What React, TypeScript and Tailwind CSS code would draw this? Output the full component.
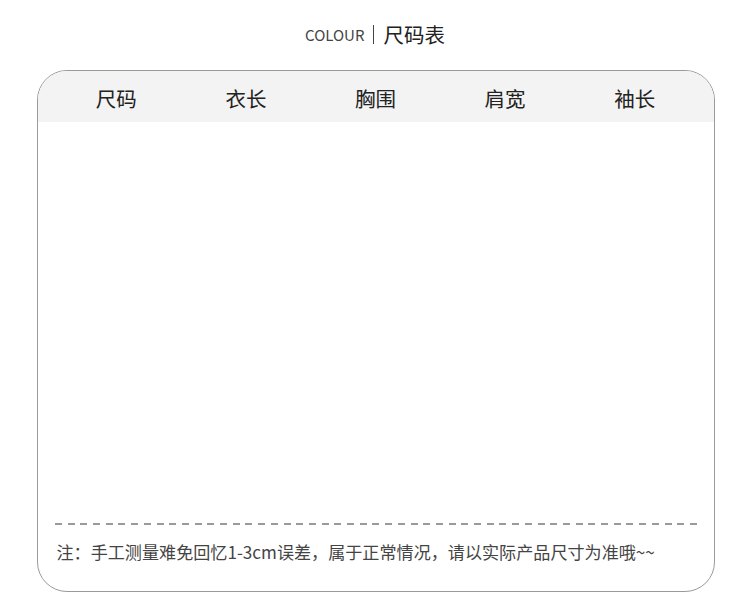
export default function App() {
  const cols = ["尺码", "衣长", "胸围", "肩宽", "袖长"];
  return (
    <div
      className="w-[750px] h-[615px] bg-white flex flex-col items-center"
      style={{ fontFamily: '"Noto Sans CJK SC", "Noto Sans", sans-serif' }}
    >
      {/* Title */}
      <div className="h-[70px] flex items-center gap-[9px] pb-[2px] text-[#222]">
        <span className="text-[15px] text-[#444] mt-[2px]">COLOUR</span>
        <span className="w-px h-[19px] bg-[#444]" />
        <span className="text-[20.5px]">尺码表</span>
      </div>

      {/* Card */}
      <div className="w-[678px] h-[522px] ml-[1px] rounded-[30px] border border-[#9a9a9a] overflow-hidden flex flex-col">
        <div className="h-[51px] bg-[#f3f3f3] grid grid-cols-5 px-[14px] items-center">
          {cols.map((c) => (
            <div key={c} className="text-center text-[20.5px] text-[#222] pt-[4px]">
              {c}
            </div>
          ))}
        </div>
        <div className="flex-1" />
        <div className="mx-[17px] h-[2px] bg-[repeating-linear-gradient(to_right,#9a9a9a_0_7px,transparent_7px_12.7px)]" />
        <div className="h-[66px] px-[19px] pt-[14px] text-[17.1px] text-[#444]">
          注：手工测量难免回忆1-3cm误差，属于正常情况，请以实际产品尺寸为准哦~~
        </div>
      </div>
    </div>
  );
}
